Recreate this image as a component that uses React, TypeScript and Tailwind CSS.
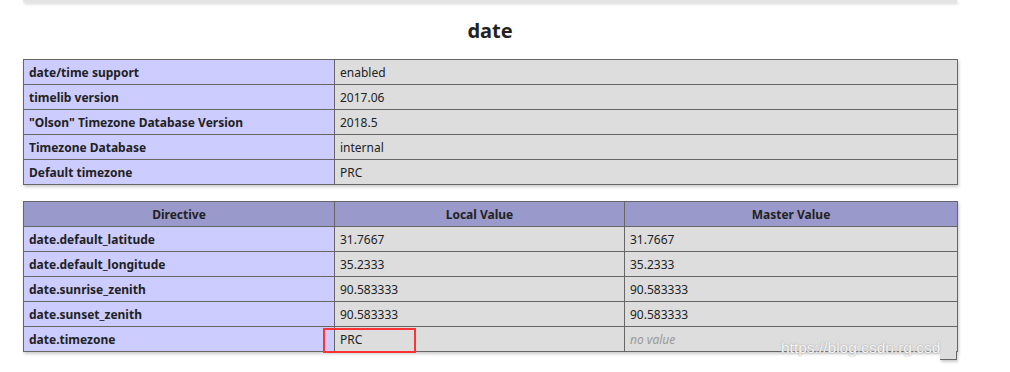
import React from "react";

const info: [string, string][] = [
  ["date/time support", "enabled"],
  ["timelib version", "2017.06"],
  ['"Olson" Timezone Database Version', "2018.5"],
  ["Timezone Database", "internal"],
  ["Default timezone", "PRC"],
];

const directives: [string, string, string | null][] = [
  ["date.default_latitude", "31.7667", "31.7667"],
  ["date.default_longitude", "35.2333", "35.2333"],
  ["date.sunrise_zenith", "90.583333", "90.583333"],
  ["date.sunset_zenith", "90.583333", "90.583333"],
  ["date.timezone", "PRC", null],
];

const cell = "border border-[#666] px-[5px] pt-[5px] pb-[3px] leading-[16px] text-[12px] align-baseline";

export default function App() {
  return (
    <div className="relative w-[1010px] h-[372px] bg-white text-[#222] overflow-hidden" style={{ fontFamily: '"Noto Sans", "Liberation Sans", sans-serif' }}>
      {/* bottom edge of the previous section's table */}
      <div className="ml-[23px] w-[934px] h-[2px] bg-[#e4e4e4] shadow-[1px_2px_3px_#ccc]" />

      <div className="w-[1010px] pl-[23px]">
        <h2 className="w-[934px] h-[57px] flex items-center justify-center text-[20px] font-bold leading-[28px]">date</h2>

        <table className="w-[934px] table-fixed border-collapse shadow-[1px_2px_3px_#ccc]">
          <colgroup>
            <col className="w-[311px]" />
            <col className="w-[623px]" />
          </colgroup>
          <tbody>
            {info.map(([k, v]) => (
              <tr key={k}>
                <td className={`${cell} bg-[#ccf] font-bold`}>{k}</td>
                <td className={`${cell} bg-[#ddd]`}>{v}</td>
              </tr>
            ))}
          </tbody>
        </table>

        <table className="mt-[16px] w-[934px] table-fixed border-collapse shadow-[1px_2px_3px_#ccc]">
          <colgroup>
            <col className="w-[311px]" />
            <col className="w-[290px]" />
            <col className="w-[333px]" />
          </colgroup>
          <thead>
            <tr>
              <th className={`${cell} bg-[#99c] font-bold text-center`}>Directive</th>
              <th className={`${cell} bg-[#99c] font-bold text-center`}>Local Value</th>
              <th className={`${cell} bg-[#99c] font-bold text-center`}>Master Value</th>
            </tr>
          </thead>
          <tbody>
            {directives.map(([k, local, master]) => (
              <tr key={k}>
                <td className={`${cell} bg-[#ccf] font-bold`}>{k}</td>
                <td className={`${cell} bg-[#ddd]`}>{local}</td>
                <td className={`${cell} bg-[#ddd]`}>
                  {master ?? <i className="text-[#999]">no value</i>}
                </td>
              </tr>
            ))}
          </tbody>
        </table>
      </div>

      {/* red highlight around PRC */}
      <div className="absolute left-[323px] top-[328px] w-[93px] h-[25px] border-[2.5px] border-[#f33]" />

      {/* csdn watermark */}
      <div className="absolute left-[940px] top-[351px] w-[17px] h-[9px] bg-[#ddd] border-r border-b border-[#666] shadow-[1px_2px_3px_#ccc]" />
      <div
        className="absolute left-[781px] top-[338px] whitespace-nowrap text-[15.5px] leading-[20px] text-white/90"
        style={{ fontFamily: '"Liberation Sans", sans-serif', textShadow: "0 0 1px #999, 0 0 2px #bbb" }}
      >
        https://blog.csdn.rg.csd
      </div>
    </div>
  );
}
